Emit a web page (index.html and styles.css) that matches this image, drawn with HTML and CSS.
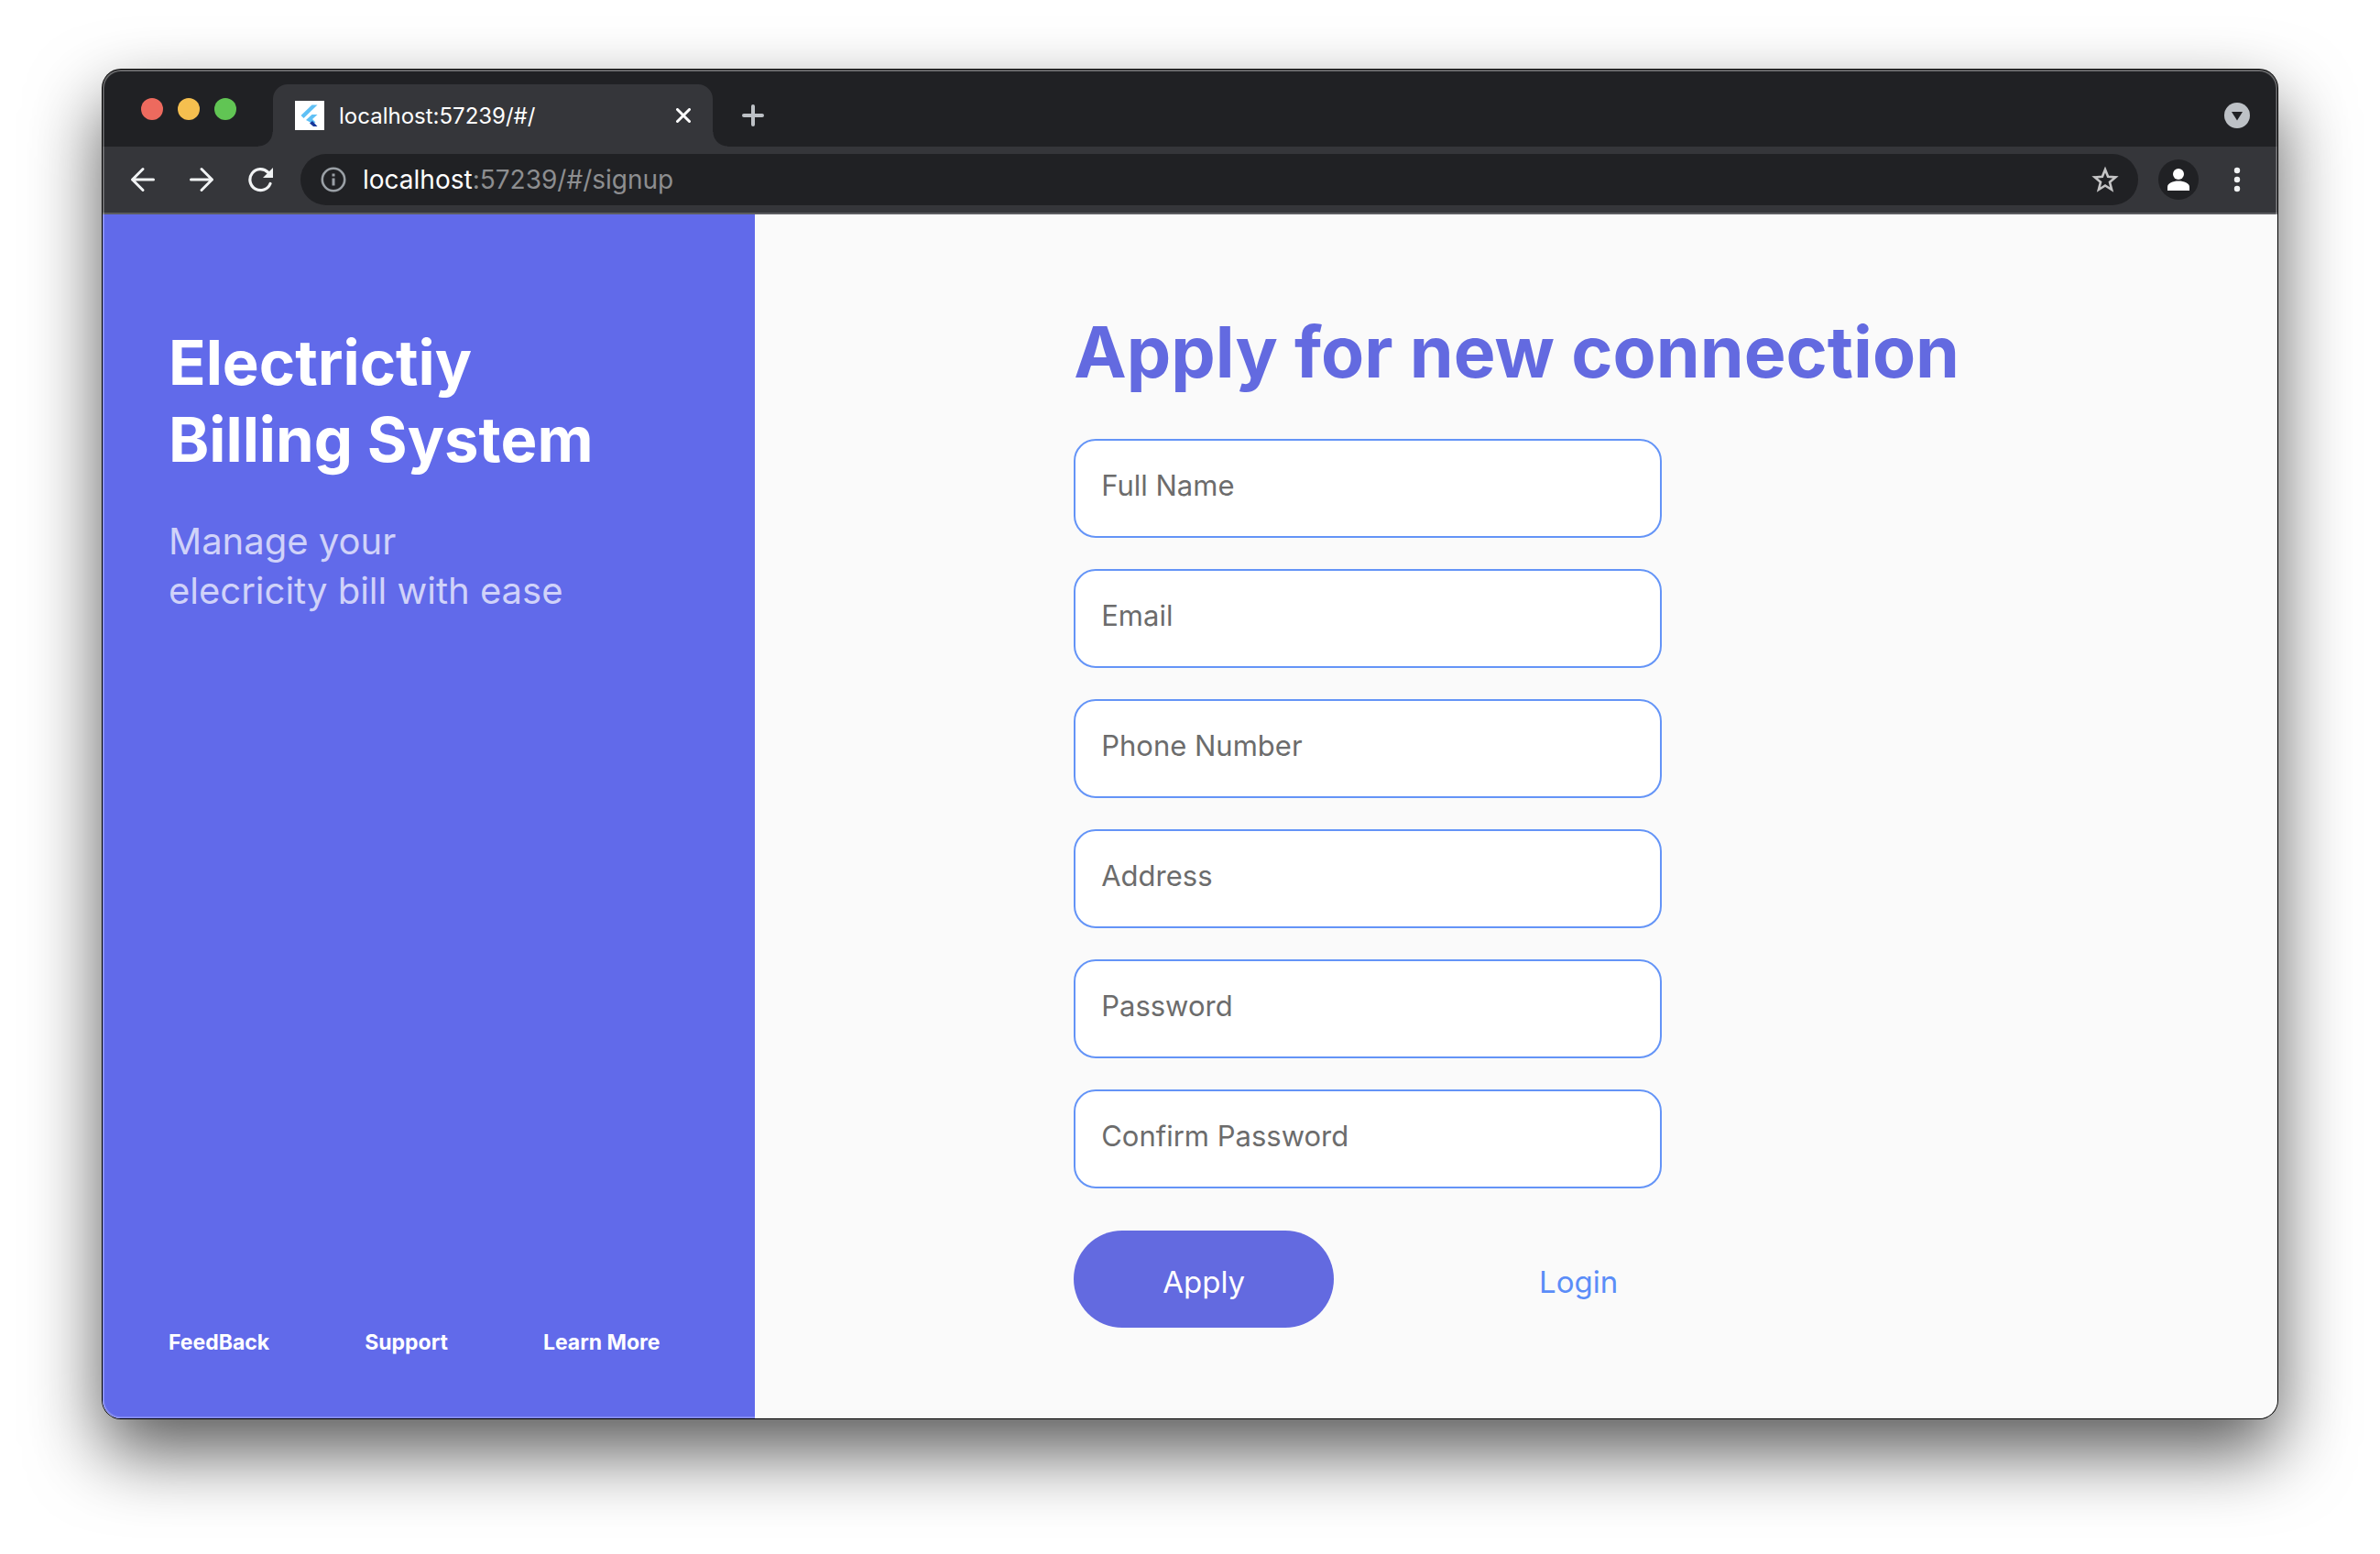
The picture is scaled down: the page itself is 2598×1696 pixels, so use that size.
FILE: index.html
```html
<!DOCTYPE html>
<html lang="en">
<head>
<meta charset="utf-8">
<meta name="viewport" content="width=device-width, initial-scale=1">
<title>Electricity Billing System</title>
<link rel="stylesheet" href="styles.css">
</head>
<body>
<div class="window">
  <header class="tabstrip">
    <div class="lights">
      <span class="light light-close"></span>
      <span class="light light-min"></span>
      <span class="light light-max"></span>
    </div>
    <div class="tab">
      <svg class="favicon" viewBox="0 0 32 32" aria-hidden="true">
        <path fill="#fff" d="M0 0h32v32H0z"/>
        <path fill="#5fc0f5" d="M18.500 4.500H24.500L9.500 19l-3-3zM18.500 15H24.500l-5.500 5 3.500 3.500-3 1.500-7.500-4z"/>
        <path fill="#16379b" d="M16 24.500l3-2.500 5.500 6H20z"/>
      </svg>
      <span class="tab-title">localhost:57239/#/</span>
      <button class="icon-btn" type="button" aria-label="Close tab">
        <svg width="16" height="16" viewBox="0 0 16 16"><path d="M1.500 1.500l13 13M14.500 1.500l-13 13" stroke="#fff" stroke-width="3" stroke-linecap="round"/></svg>
      </button>
    </div>
    <button class="icon-btn new-tab" type="button" aria-label="New tab">
      <svg width="24" height="24" viewBox="0 0 24 24"><path d="M12 2v20M2 12h20" stroke="#bdc1c6" stroke-width="4" stroke-linecap="round"/></svg>
    </button>
    <button class="icon-btn tab-search" type="button" aria-label="Search tabs">
      <svg width="28" height="28" viewBox="0 0 28 28"><circle cx="14" cy="14" r="14" fill="#bdc1c6"/><path d="M8 10h12l-6 9.500z" fill="#202124"/></svg>
    </button>
  </header>

  <nav class="toolbar" aria-label="Browser">
    <div class="history">
      <button class="icon-btn" type="button" aria-label="Back">
        <svg width="28" height="28" viewBox="0 0 28 28" fill="none" stroke="#f1f3f4" stroke-width="3" stroke-linecap="round" stroke-linejoin="round"><path d="M25.500 14h-23M14 2.500L2.500 14 14 25.500"/></svg>
      </button>
      <button class="icon-btn" type="button" aria-label="Forward">
        <svg width="28" height="28" viewBox="0 0 28 28" fill="none" stroke="#f1f3f4" stroke-width="3" stroke-linecap="round" stroke-linejoin="round"><path d="M2.500 14h23M14 2.500L25.500 14 14 25.500"/></svg>
      </button>
      <button class="icon-btn" type="button" aria-label="Reload">
        <svg width="28" height="28" viewBox="0 0 28 28"><path d="M25 18.500A11.500 11.500 0 1 1 22.500 6" fill="none" stroke="#f1f3f4" stroke-width="3.200" stroke-linecap="round"/><path d="M28 1v11H17z" fill="#f1f3f4"/></svg>
      </button>
    </div>
    <div class="omnibox">
      <svg width="28" height="28" viewBox="0 0 28 28" aria-hidden="true"><circle cx="14" cy="14" r="12.200" fill="none" stroke="#9aa0a6" stroke-width="2.600"/><path d="M12.500 7.500h3v3h-3zM12.500 12.500h3v8h-3z" fill="#9aa0a6"/></svg>
      <span class="url"><span class="url-host">localhost</span>:57239/#/signup</span>
      <button class="icon-btn" type="button" aria-label="Bookmark">
        <svg width="32" height="32" viewBox="0 0 32 32"><path d="M16 5l3.100 7.800 8.300.6-6.400 5.400 2.100 8.200-7.100-4.500L8.900 27l2.100-8.200-6.400-5.400 8.300-.6z" fill="none" stroke="#c4c4c5" stroke-width="2.600"/></svg>
      </button>
    </div>
    <div class="account">
      <button class="icon-btn" type="button" aria-label="Profile">
        <svg width="44" height="44" viewBox="0 0 44 44"><circle cx="22" cy="22" r="22" fill="#202124"/><circle cx="22" cy="16" r="6" fill="#fff"/><path d="M10 34v-4c0-4 6-6.500 12-6.500S34 26 34 30v4z" fill="#fff"/></svg>
      </button>
      <button class="icon-btn" type="button" aria-label="Menu">
        <svg width="28" height="28" viewBox="0 0 28 28" fill="#f1f3f4"><circle cx="14" cy="4" r="3.200"/><circle cx="14" cy="14" r="3.200"/><circle cx="14" cy="24" r="3.200"/></svg>
      </button>
    </div>
  </nav>

  <div class="page">
    <aside class="side">
      <h2 class="brand">Electrictiy<br>Billing System</h2>
      <p class="tagline">Manage your<br>elecricity bill with ease</p>
      <nav class="links" aria-label="Footer">
        <a href="#feedback">FeedBack</a>
        <a href="#support">Support</a>
        <a href="#learn">Learn More</a>
      </nav>
    </aside>
    <main class="main">
      <h1 class="heading">Apply for new connection</h1>
      <form class="form">
        <input class="field" type="text" aria-label="Full Name" placeholder="Full Name">
        <input class="field" type="email" aria-label="Email" placeholder="Email">
        <input class="field" type="tel" aria-label="Phone Number" placeholder="Phone Number">
        <input class="field" type="text" aria-label="Address" placeholder="Address">
        <input class="field" type="password" aria-label="Password" placeholder="Password">
        <input class="field" type="password" aria-label="Confirm Password" placeholder="Confirm Password">
        <div class="actions">
          <button class="apply" type="button">Apply</button>
          <a class="login" href="#login">Login</a>
        </div>
      </form>
    </main>
  </div>
</div>
</body>
</html>
```
FILE: styles.css
```css
* {
  box-sizing: border-box;
}

body {
  margin: 0;
  min-height: 100vh;
  padding: 76px 112px 148px;
  display: flex;
  background: #fff;
  font-family: Inter, "Liberation Sans", sans-serif;
}

h1, h2, p {
  margin: 0;
}

a {
  text-decoration: none;
}

svg {
  display: block;
}

/* Browser window */
.window {
  position: relative;
  flex: 1;
  min-width: 0;
  display: flex;
  flex-direction: column;
  border-radius: 20px;
  background: #202124;
  box-shadow: 0 0 0 1px #000, 0 36px 80px rgba(0, 0, 0, 0.66);
}

.window::after {
  content: "";
  position: absolute;
  inset: 0;
  border-radius: 20px;
  box-shadow: inset 0 0 0 2px rgba(255, 255, 255, 0.22), inset 0 1px 0 1px rgba(255, 255, 255, 0.12);
  pointer-events: none;
}

.icon-btn {
  flex: none;
  padding: 0;
  border: 0;
  background: none;
}

.tabstrip {
  display: flex;
  align-items: center;
  height: 84px;
  padding: 16px 30px 0 42px;
}

.lights {
  display: flex;
  gap: 16px;
  width: 144px;
  padding-bottom: 14px;
}

.light {
  width: 24px;
  height: 24px;
  border-radius: 50%;
}

.light-close { background: #ed6a5e; }
.light-min { background: #f5bf4f; }
.light-max { background: #61c554; }

.tab {
  position: relative;
  display: flex;
  align-items: center;
  width: 480px;
  height: 68px;
  padding: 0 24px;
  border-radius: 16px 16px 0 0;
  background: #35363a;
}

.tab::before,
.tab::after {
  content: "";
  position: absolute;
  bottom: 0;
  width: 16px;
  height: 16px;
}

.tab::before {
  right: 100%;
  background: radial-gradient(circle at 0 0, transparent 15px, #35363a 16px);
}

.tab::after {
  left: 100%;
  background: radial-gradient(circle at 100% 0, transparent 15px, #35363a 16px);
}

.favicon {
  width: 32px;
  height: 32px;
}

.tab-title {
  flex: 1;
  padding-left: 16px;
  color: #fff;
  font-size: 24px;
}

.new-tab {
  margin-left: 32px;
}

.tab-search {
  margin-left: auto;
}

.toolbar {
  display: flex;
  align-items: center;
  height: 74px;
  padding: 0 30px;
  border-bottom: 2px solid #5b5c60;
  background: #35363a;
}

.history {
  display: flex;
  gap: 36px;
}

.account {
  display: flex;
  align-items: center;
  gap: 28px;
}

.omnibox {
  flex: 1;
  display: flex;
  align-items: center;
  height: 56px;
  margin: 0 22px 0 30px;
  padding: 0 20px 0 22px;
  border-radius: 28px;
  background: #202124;
}

.url {
  flex: 1;
  padding-left: 18px;
  color: #8d8e90;
  font-size: 28px;
}

.url-host {
  color: #fff;
}

/* Page */
.page {
  flex: 1;
  display: flex;
  border-radius: 0 0 20px 20px;
  overflow: hidden;
  background: #fafafa;
}

.side {
  width: 30%;
  display: flex;
  flex-direction: column;
  padding: 120px 24px 69px 72px;
  background: #616aea;
  color: #fff;
}

.brand {
  font-size: 67px;
  line-height: 84px;
  font-weight: 700;
}

.tagline {
  margin-top: 42px;
  color: #d0d2f9;
  font-size: 40px;
  line-height: 54px;
}

.links {
  display: flex;
  gap: 104px;
  margin-top: auto;
}

.links a {
  color: #fff;
  font-size: 23px;
  line-height: 28px;
  font-weight: 700;
  white-space: nowrap;
}

.main {
  flex: 1;
  padding: 102px 48px 97px 348px;
}

.heading {
  color: #636ae0;
  font-size: 77px;
  line-height: 96px;
  font-weight: 700;
}

.form {
  display: flex;
  flex-direction: column;
  gap: 34px;
  max-width: 642px;
  margin-top: 47px;
}

.field {
  width: 100%;
  height: 108px;
  padding: 0 28px 8px;
  border: 2px solid #6494f7;
  border-radius: 24px;
  background: #fff;
  color: #222;
  font-family: inherit;
  font-size: 31px;
}

.field::placeholder {
  color: #6c6c6c;
  opacity: 1;
}

.actions {
  display: flex;
  align-items: center;
  justify-content: space-between;
  margin-top: 12px;
  padding-right: 48px;
}

.apply {
  width: 284px;
  height: 106px;
  padding: 6px 0 0;
  border: 0;
  border-radius: 53px;
  background: #636ae0;
  color: #fff;
  font-family: inherit;
  font-size: 33px;
}

.login {
  padding-top: 6px;
  color: #5a8df8;
  font-size: 33px;
}
```
